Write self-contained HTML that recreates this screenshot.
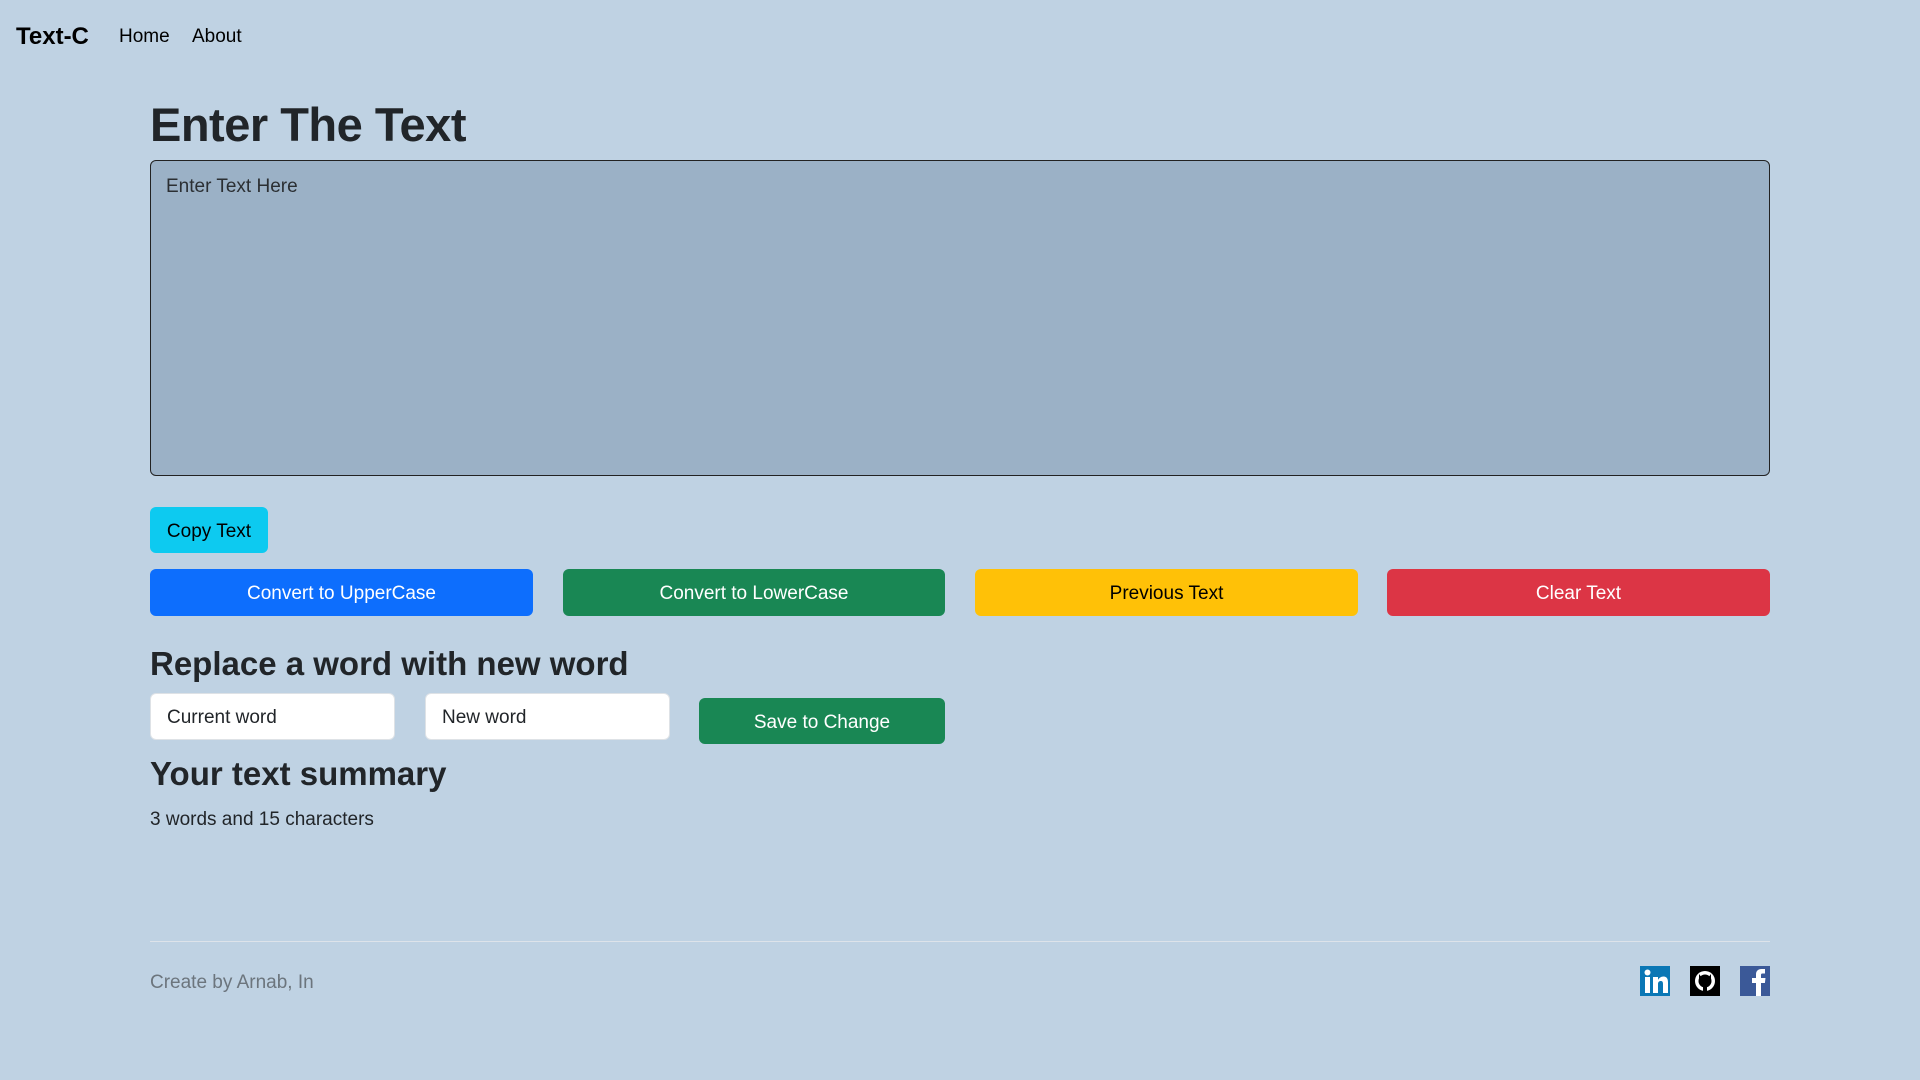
<!DOCTYPE html>
<html><head><meta charset="utf-8"><style>
*{box-sizing:border-box;margin:0;padding:0}
body{width:1920px;height:1080px;background:#bfd2e3;font-family:"Liberation Sans",sans-serif;color:#212529;position:relative;overflow:hidden}
.a{position:absolute;white-space:nowrap}
.btn{position:absolute;border-radius:6px;color:#fff;font-size:19px;display:flex;align-items:center;justify-content:center;padding-top:3px}
.inp{position:absolute;background:#fff;border:1px solid #dee2e6;border-radius:6px;font-size:19px;padding-left:16px;padding-top:3px;display:flex;align-items:center;color:#212529}
</style></head><body>
<div class="a" style="left:16px;top:23px;font-size:24px;font-weight:bold;color:#000">Text-C</div>
<div class="a" style="left:119px;top:26px;font-size:19px;color:#000">Home</div>
<div class="a" style="left:192px;top:26px;font-size:19px;color:#000">About</div>
<div class="a" style="left:150px;top:97px;font-size:47px;font-weight:bold;color:#212529;letter-spacing:-0.5px">Enter The Text</div>
<div class="a" style="left:150px;top:160px;width:1620px;height:316px;background:#9bb1c6;border:1.5px solid #222;border-radius:6px"></div>
<div class="a" style="left:166px;top:176px;font-size:19px;color:#2b2f33">Enter Text Here</div>
<div class="btn" style="left:150px;top:507px;width:118px;height:46px;background:#0dcaf0;color:#000">Copy Text</div>
<div class="btn" style="left:150px;top:569px;width:383px;height:47px;background:#0d6efd">Convert to UpperCase</div>
<div class="btn" style="left:563px;top:569px;width:382px;height:47px;background:#198754">Convert to LowerCase</div>
<div class="btn" style="left:975px;top:569px;width:383px;height:47px;background:#ffc107;color:#000">Previous Text</div>
<div class="btn" style="left:1387px;top:569px;width:383px;height:47px;background:#dc3545">Clear Text</div>
<div class="a" style="left:150px;top:645px;font-size:33px;font-weight:bold">Replace a word with new word</div>
<div class="inp" style="left:150px;top:693px;width:245px;height:47px">Current word</div>
<div class="inp" style="left:425px;top:693px;width:245px;height:47px">New word</div>
<div class="btn" style="left:699px;top:698px;width:246px;height:46px;background:#198754">Save to Change</div>
<div class="a" style="left:150px;top:755px;font-size:33px;font-weight:bold">Your text summary</div>
<div class="a" style="left:150px;top:809px;font-size:19px">3 words and 15 characters</div>
<div class="a" style="left:150px;top:941px;width:1620px;height:1px;background:#dde3ea"></div>
<div class="a" style="left:150px;top:972px;font-size:19px;color:#6c757d">Create by Arnab, In</div>
<svg class="a" style="left:1640px;top:966px" width="30" height="30" viewBox="0 0 30 30"><rect width="30" height="30" fill="#0a77b5"/><rect x="5" y="11" width="5" height="16" fill="#fff"/><circle cx="7.5" cy="6.5" r="3" fill="#fff"/><path d="M13 11h5v3c1-2 3-3.5 5.5-3.5 3.5 0 4.5 2.5 4.5 6V27h-5v-9c0-2-.6-3-2.2-3S18 16 18 18v9h-5z" fill="#fff"/></svg>
<svg class="a" style="left:1690px;top:966px" width="30" height="30" viewBox="0 0 30 30"><rect width="30" height="30" fill="#000"/><circle cx="15" cy="15" r="10" fill="#fff"/><circle cx="15" cy="15" r="6.5" fill="#000"/><path d="M9 8l3 4h6l3-4v6H9z" fill="#000"/><rect x="13" y="19" width="4" height="7" fill="#000"/></svg>
<svg class="a" style="left:1740px;top:966px" width="30" height="30" viewBox="0 0 30 30"><rect width="30" height="30" fill="#3b5998"/><path d="M16 30V17h-4v-5h4V8.5C16 5 18 3 21.5 3H25v4.5h-2.5c-1.3 0-1.5.6-1.5 1.7V12h4.5l-.6 5H21v13z" fill="#fff"/></svg>
</body></html>
